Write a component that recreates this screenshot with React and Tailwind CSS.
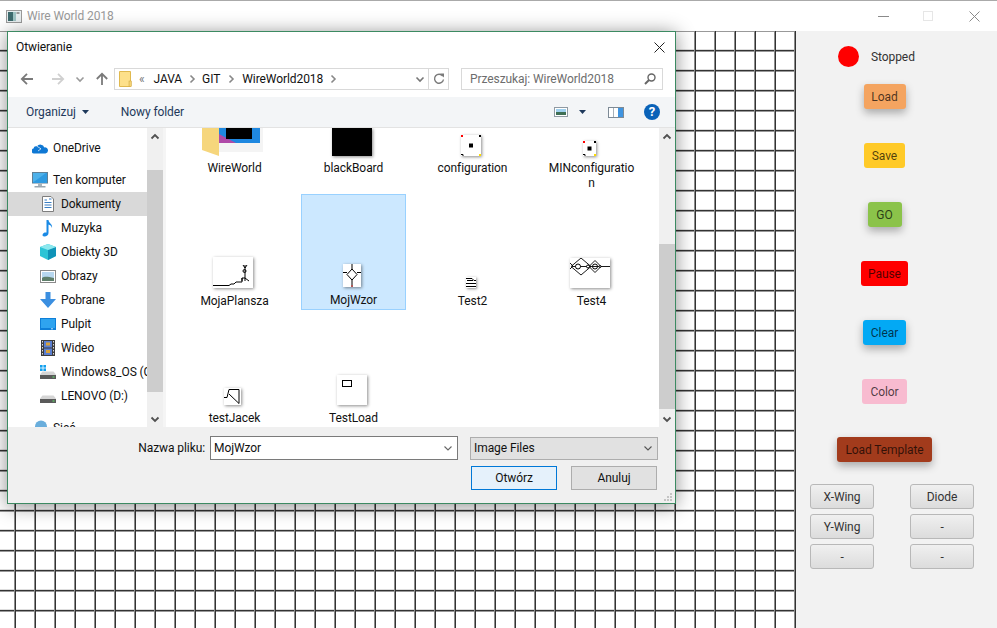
import React from "react";

const Chevron = ({ dir = "down", className = "", color = "#6b6b6b", w = 1.6 }) => {
  const d = { down: "M1.5 3.5 5 7l3.5-3.5", up: "M1.5 6.5 5 3l3.5 3.5", right: "M3.5 1.5 7 5 3.5 8.5" }[dir];
  return (
    <svg width="10" height="10" viewBox="0 0 10 10" className={className}>
      <path d={d} fill="none" stroke={color} strokeWidth={w} />
    </svg>
  );
};

const Arrow = ({ color, rot = 0, className = "" }) => (
  <svg width="14" height="14" viewBox="0 0 14 14" className={className} style={{ transform: `rotate(${rot}deg)` }}>
    <path d="M13 7H2M7 1.8 1.8 7 7 12.2" fill="none" stroke={color} strokeWidth="1.8" />
  </svg>
);

const OneDriveIcon = () => (
  <svg width="16" height="16" viewBox="0 0 16 16">
    <path d="M1.800 13.500A2.500 2.500 0 0 1 1.500 8.600 2.800 2.800 0 0 1 5 6.300 4.200 4.200 0 0 1 12.300 7.400 3.100 3.100 0 0 1 16 10.400 3 3 0 0 1 13.500 13.500Z" fill="#0f78d4" />
    <path d="M5 6.300 9 8.800 6 11" fill="none" stroke="#fff" strokeWidth="0.700" />
  </svg>
);
const PcIcon = () => (
  <svg width="16" height="16" viewBox="0 0 16 16">
    <rect x="0.500" y="0.500" width="15" height="10.500" fill="#4db1ea" stroke="#5f7f95" />
    <path d="M1 10.500 14 1h1v10H1Z" fill="#2f9ae0" />
    <rect x="6" y="11.500" width="4" height="2.500" fill="#aab4bb" />
    <rect x="2.500" y="14" width="11" height="1.500" fill="#9aa7b0" />
  </svg>
);
const DocIcon = () => (
  <svg width="16" height="16" viewBox="0 0 16 16">
    <path d="M2.500 0.500H11L13.500 3V15.500H2.500Z" fill="#fff" stroke="#7d7d7d" />
    <path d="M4.500 4H7M4.500 6.500H11.500M4.500 9H11.500M4.500 11.500H11.500M9 3H11.500" stroke="#3b7fc4" strokeWidth="1" />
  </svg>
);
const MusicIcon = () => (
  <svg width="16" height="17" viewBox="0 0 16 17">
    <path d="M6.500 0h2c0 3 4.500 4 3.500 8-.6-2-2-3-3.500-3.400V13c0 2.200-2 3.500-4 3.500S2 15.200 3 13.800c.8-1.200 2.300-1.600 3.500-1.200Z" fill="#1a8ae5" />
  </svg>
);
const CubeIcon = () => (
  <svg width="16" height="16" viewBox="0 0 16 16">
    <path d="M8 0 16 3v9l-8 4-8-4V3Z" fill="#2cc4d6" />
    <path d="M8 6 16 3v9l-8 4Z" fill="#0f93b8" />
    <path d="M8 0 16 3 8 6 0 3Z" fill="#8de8ee" />
  </svg>
);
const PicIcon = () => (
  <svg width="16" height="13" viewBox="0 0 16 13">
    <rect x="0.500" y="0.500" width="15" height="12" fill="#fff" stroke="#8a8a8a" />
    <rect x="2" y="2" width="12" height="9" fill="#b7d7ef" />
    <path d="M2 8c3-2 6-1 12 0v3H2Z" fill="#5f7f6b" />
  </svg>
);
const DownIcon = () => (
  <svg width="16" height="16" viewBox="0 0 16 16">
    <path d="M5.500 0h5v7H16L8 16 0 7h5.500Z" fill="#3b8fe0" />
  </svg>
);
const DesktopIcon = () => (
  <svg width="16" height="12" viewBox="0 0 16 12">
    <rect width="16" height="12" fill="#0e7fd8" />
    <rect x="1" y="1" width="14" height="9" fill="#2fa4ef" />
    <rect x="11" y="10.300" width="2" height="1" fill="#bfe3fa" />
  </svg>
);
const FilmIcon = () => (
  <svg width="14" height="16" viewBox="0 0 14 16">
    <rect width="14" height="16" fill="#3c3c3c" />
    <rect x="3" y="1" width="8" height="6.500" fill="#5b7fd0" />
    <rect x="3" y="8.500" width="8" height="6.500" fill="#5b7fd0" />
    <rect x="5" y="2.500" width="4" height="3" fill="#d8a23a" />
    <rect x="5" y="10" width="4" height="3" fill="#d8a23a" />
    <path d="M1.500 1v14M12.500 1v14" stroke="#ddd" strokeDasharray="1.500 1.500" />
  </svg>
);
const DriveIcon = ({ win }) => (
  <svg width="16" height="14" viewBox="0 0 16 14">
    {win && (
      <g fill="#12a0ee">
        <rect x="0" y="0" width="2.600" height="2.600" />
        <rect x="3.400" y="0" width="2.600" height="2.600" />
        <rect x="0" y="3.400" width="2.600" height="2.600" />
        <rect x="3.400" y="3.400" width="2.600" height="2.600" />
      </g>
    )}
    <path d="M2.500 6.500h11l2.500 3v1H0v-1Z" fill="#d5d5d5" />
    <rect x="0" y="10" width="16" height="4" fill="#5a5a5a" />
    <rect x="12.500" y="11.500" width="2" height="1" fill="#5fe36a" />
  </svg>
);
const GlobeIcon = () => (
  <svg width="16" height="16" viewBox="0 0 16 16">
    <circle cx="9" cy="6.500" r="6" fill="#6aaedc" />
    <path d="M0 13h16v1H0Z" fill="#1c6aa8" />
  </svg>
);

const navTop = "flex items-center h-6 gap-[5px] whitespace-nowrap";
const NavItem = ({ icon, label, selected }) => (
  <div className={`${navTop} pl-8 ${selected ? "bg-[#d9d9d9]" : ""}`}>
    <span className="w-4 h-4 flex items-center justify-center shrink-0">{icon}</span>
    <span>{label}</span>
  </div>
);

const Thumb = ({ w, h, children }) => (
  <div className="bg-white shadow-[1px_1px_3px_rgba(0,0,0,0.45)]" style={{ width: w, height: h }}>
    <svg width={w} height={h} viewBox={`0 0 ${w} ${h}`} className="block">
      {children}
    </svg>
  </div>
);

const FolderThumb = () => (
  <svg width="61" height="28" viewBox="0 0 61 28" className="block">
    <rect x="17" y="0" width="44" height="24" fill="#f4f4f4" />
    <rect x="17" y="0" width="41" height="15" fill="#1f88e0" />
    <path d="M17 6 34 15H17Z" fill="#b04aa8" />
    <rect x="24" y="0" width="26" height="11" fill="#000" />
    <path d="M0 0H17V28L0 22Z" fill="#f6d67c" />
  </svg>
);

const ConfigThumb = ({ w, h, s }) => (
  <Thumb w={w} h={h}>
    <rect x="0" y="0" width={s} height={s} fill="#f00" />
    <rect x={w - s} y="0" width={s} height={s} fill="#000" />
    <path d={`M0 ${h - s + 0.5}H${s}V${h}`} fill="none" stroke="#000" />
    <rect x={w - s} y={h - s} width={s} height={s} fill="#fd0" />
    <rect x={w / 2 - 2} y={h / 2 - 2} width="4" height="4" fill="#000" />
  </Thumb>
);

const FileCell = ({ thumb, label, selected, pb = "pb-[1px]", gap = "mt-[6px]" }) => (
  <div
    className={`flex flex-col items-center justify-end ${pb} min-w-0 ${
      selected ? "bg-[#cce8ff] border border-[#99d1ff]" : ""
    }`}
  >
    <div className="mr-1">{thumb}</div>
    <div className={`${gap} w-[90px] text-center leading-[15px] break-all`}>{label}</div>
  </div>
);

const SideBtn = ({ label, bg, shadow, w, top }) => (
  <button
    className={`h-[25px] rounded-[3px] text-[12px] text-black/70 ${bg} ${shadow ? "shadow-[0_4px_8px_rgba(0,0,0,0.3)]" : ""} ${w} ${top}`}
  >
    {label}
  </button>
);

const GrayBtn = ({ label }) => (
  <button className="h-[25px] rounded-[3px] border border-[#b8b8b8] bg-[linear-gradient(#f0f0f0,#dcdcdc)] text-[12px] text-[#333]">
    {label}
  </button>
);

export default function App() {
  return (
    <div className="w-[997px] h-[628px] flex flex-col overflow-hidden bg-white text-[12px] tracking-[-0.08px] text-[#111] font-['Roboto','Liberation_Sans',sans-serif]">
      {/* main window title bar */}
      <div className="h-[31px] shrink-0 flex items-center bg-white border-t border-[#aaaaaa] pl-[6px]">
        <svg width="16" height="13" viewBox="0 0 16 13">
          <rect x="0.500" y="0.500" width="15" height="12" fill="#e8eef0" stroke="#9a9a9a" />
          <rect x="2" y="2" width="5" height="9" fill="#3d6b6e" />
          <rect x="7" y="2" width="3" height="9" fill="#9fc4c4" />
          <rect x="10.500" y="2" width="3" height="2" fill="#9a9a9a" />
        </svg>
        <span className="ml-[5px] text-[#9a9a9a]">Wire World 2018</span>
        <div className="ml-auto flex items-center">
          <div className="w-[11px] h-px bg-[#8a8a8a] mr-[34px]" />
          <div className="w-[10px] h-[10px] border border-[#e6e6e6] mr-[36px]" />
          <svg width="11" height="11" viewBox="0 0 11 11" className="mr-[17px]">
            <path d="M0.500 0.500l10 10M10.500 0.500l-10 10" stroke="#8a8a8a" />
          </svg>
        </div>
      </div>

      <div className="flex-1 flex min-h-0">
        {/* canvas */}
        <div className="relative w-[796px] shrink-0 bg-white bg-[linear-gradient(to_right,transparent_14px,#8c8c8c_14px,#8c8c8c_15px,#333333_15px,#333333_16px,transparent_16px),linear-gradient(to_bottom,#999999_1px,transparent_1px,transparent_18px,#dddddd_18px,#dddddd_19px,#333333_19px)] bg-[size:20px_20px]">
          {/* dialog */}
          <div className="absolute left-[7px] top-0 w-[669px] h-[473px] flex flex-col border border-[#3c8a62] bg-white shadow-[0_2px_18px_rgba(0,0,0,0.45)]">
            <div className="h-[28px] shrink-0 flex items-center justify-between pl-2 pr-[10px] pt-[2px]">
              <span>Otwieranie</span>
              <svg width="11" height="11" viewBox="0 0 11 11">
                <path d="M0.500 0.500l10 10M10.500 0.500l-10 10" stroke="#222" />
              </svg>
            </div>

            {/* nav row */}
            <div className="h-[37px] shrink-0 flex items-center">
              <Arrow color="#7a7a7a" className="ml-3" />
              <Arrow color="#d0d0d0" rot={180} className="ml-[17px]" />
              <Chevron className="ml-[10px]" color="#9a9a9a" />
              <Arrow color="#7a7a7a" rot={90} className="ml-[10px]" />
              <div className="ml-[5px] w-[335px] h-[22px] border border-[#d9d9d9] flex items-center pl-1">
                <svg width="13" height="16" viewBox="0 0 13 16" className="shrink-0">
                  <path d="M0.500 0.500H11.500V15.500H0.500Z" fill="#fde08a" stroke="#e0b94f" />
                  <rect x="10" y="10" width="2.500" height="5.500" fill="#f5d272" stroke="#c9a23f" strokeWidth="0.500" />
                </svg>
                <span className="ml-[7px] text-[#777]">«</span>
                <span className="ml-[9px]">JAVA</span>
                <Chevron dir="right" className="mx-[5px]" color="#888" />
                <span>GIT</span>
                <Chevron dir="right" className="mx-[6px]" color="#888" />
                <span>WireWorld2018</span>
                <Chevron dir="right" className="mx-[5px]" color="#888" />
                <Chevron className="ml-auto mr-[3px]" color="#777" />
                <div className="h-full border-l border-[#d9d9d9] w-[20px] flex items-center justify-center">
                  <svg width="12" height="12" viewBox="0 0 12 12">
                    <path d="M9.800 3.200A4.500 4.500 0 1 0 10.500 6.500" fill="none" stroke="#7a7a7a" strokeWidth="1.400" />
                    <path d="M7 0.500h4v4Z" fill="#7a7a7a" />
                  </svg>
                </div>
              </div>
              <div className="ml-3 w-[202px] h-[22px] border border-[#d9d9d9] flex items-center pl-2 pr-[6px] text-[#6d6d6d]">
                <span>Przeszukaj: WireWorld2018</span>
                <svg width="12" height="12" viewBox="0 0 12 12" className="ml-auto">
                  <circle cx="7.500" cy="4.500" r="3.500" fill="none" stroke="#666" strokeWidth="1.400" />
                  <path d="M5 7 1 11" stroke="#666" strokeWidth="2" />
                </svg>
              </div>
            </div>

            {/* toolbar */}
            <div className="h-[31px] shrink-0 flex items-center bg-[#f3f5f7] border-b border-[#e3e3e3] text-[#1e395b] pl-[18px]">
              <span>Organizuj</span>
              <svg width="7" height="4" viewBox="0 0 7 4" className="ml-[6px]">
                <path d="M0 0h7L3.500 4Z" fill="#1e395b" />
              </svg>
              <span className="ml-[32px]">Nowy folder</span>
              <svg width="14" height="10" viewBox="0 0 14 10" className="ml-auto">
                <rect x="0.500" y="0.500" width="13" height="9" fill="#fff" stroke="#8f9aa3" />
                <rect x="2" y="2" width="10" height="3" fill="#9fd0ee" />
                <rect x="2" y="5" width="10" height="3" fill="#3f6f55" />
              </svg>
              <svg width="7" height="4" viewBox="0 0 7 4" className="ml-[11px]">
                <path d="M0 0h7L3.500 4Z" fill="#1e395b" />
              </svg>
              <svg width="16" height="11" viewBox="0 0 16 11" className="ml-[22px]">
                <rect x="0.500" y="0.500" width="15" height="10" fill="#fff" stroke="#7d8a96" />
                <rect x="10" y="1" width="5" height="9" fill="#3f94e0" />
                <rect x="5" y="1" width="1" height="9" fill="#a8b2ba" />
              </svg>
              <div className="ml-5 mr-[15px] w-4 h-4 rounded-full bg-[#0a62b8] text-white font-bold text-[13px] leading-4 text-center">?</div>
            </div>

            {/* main */}
            <div className="h-[299px] shrink-0 flex">
              <div className="w-[139px] overflow-hidden pt-2 shrink-0">
                <div className={`${navTop} pl-6`}>
                  <span className="w-4 h-4 flex items-center shrink-0"><OneDriveIcon /></span>
                  <span>OneDrive</span>
                </div>
                <div className={`${navTop} pl-6 mt-2`}>
                  <span className="w-4 h-4 flex items-center shrink-0"><PcIcon /></span>
                  <span>Ten komputer</span>
                </div>
                <NavItem icon={<DocIcon />} label="Dokumenty" selected />
                <NavItem icon={<MusicIcon />} label="Muzyka" />
                <NavItem icon={<CubeIcon />} label="Obiekty 3D" />
                <NavItem icon={<PicIcon />} label="Obrazy" />
                <NavItem icon={<DownIcon />} label="Pobrane" />
                <NavItem icon={<DesktopIcon />} label="Pulpit" />
                <NavItem icon={<FilmIcon />} label="Wideo" />
                <NavItem icon={<DriveIcon win />} label="Windows8_OS (C:)" />
                <NavItem icon={<DriveIcon />} label="LENOVO (D:)" />
                <div className={`${navTop} pl-6 mt-2`}>
                  <span className="w-4 h-4 flex items-center shrink-0"><GlobeIcon /></span>
                  <span>Sieć</span>
                </div>
              </div>
              {/* left scrollbar */}
              <div className="w-4 shrink-0 bg-[#f0f0f0] flex flex-col items-center">
                <Chevron dir="up" className="mt-1" color="#505050" w={1.8} />
                <div className="w-full h-[222px] mt-[28px] bg-[#cdcdcd]" />
                <Chevron className="mt-[22px]" color="#505050" w={1.8} />
              </div>
              <div className="w-[3px] shrink-0 bg-[#f5f5f5]" />

              {/* files */}
              <div className="w-[493px] shrink-0 overflow-hidden pl-4 grid grid-cols-[105px_105px_105px_105px] gap-x-[14px] grid-rows-[66px_116px_117px]">
                <FileCell pb="pb-[18px]" gap="mt-[5px]" thumb={<FolderThumb />} label="WireWorld" />
                <FileCell pb="pb-[18px]" gap="mt-[5px]" thumb={<div className="w-10 h-7 bg-black shadow-[1px_1px_3px_rgba(0,0,0,0.45)]" />} label="blackBoard" />
                <FileCell pb="pb-[18px]" gap="mt-[5px]" thumb={<ConfigThumb w={20} h={21} s={2} />} label="configuration" />
                <FileCell pb="pb-[3px]" gap="mt-[5px]" thumb={<ConfigThumb w={13} h={15} s={2} />} label="MINconfiguration" />

                <FileCell
                  label="MojaPlansza"
                  thumb={
                    <Thumb w={40} h={31}>
                      <path d="M0 28.500H16L18 27H21L23 25H29V21M32 24V19M29 24V21H32L36 24M32 8v11M30 8l2 3 2-3" fill="none" stroke="#000" />
                      <circle cx="31.500" cy="14" r="1.500" fill="none" stroke="#000" />
                    </Thumb>
                  }
                />
                <FileCell
                  selected
                  label="MojWzor"
                  thumb={
                    <Thumb w={18} h={23}>
                      <path d="M9 0V5M9 5l5 5.500-5 5.500-5-5.500ZM0 8.500H4M14 8.500H18M9 16V23" fill="none" stroke="#000" />
                      <rect x="8.500" y="21" width="1" height="2" fill="#d33" />
                    </Thumb>
                  }
                />
                <FileCell
                  label="Test2"
                  thumb={
                    <Thumb w={10} h={11}>
                      <path d="M0 1.500H6M0 6.500H10M0 9.500H10M6 1.500 8 3.500H10M1 3.500H7" fill="none" stroke="#000" />
                    </Thumb>
                  }
                />
                <FileCell
                  label="Test4"
                  thumb={
                    <Thumb w={40} h={30}>
                      <path d="M0 5l3 3-3 3M3 8.500H40M11 0l10 8.500-10 8.500L1 8.500ZM19 8.500l6-6 6 6-6 6Z" fill="none" stroke="#000" strokeWidth="0.900" />
                      <circle cx="8" cy="8.500" r="2.500" fill="#fff" stroke="#000" />
                      <circle cx="18" cy="8.500" r="1.500" fill="#fff" stroke="#000" />
                      <circle cx="25" cy="8.500" r="2.500" fill="none" stroke="#000" />
                      <circle cx="30" cy="8.500" r="1" fill="#fff" stroke="#000" />
                    </Thumb>
                  }
                />

                <FileCell
                  label="testJacek"
                  thumb={
                    <Thumb w={17} h={17}>
                      <path d="M0 9.500H3L5 1.500H15V15.500L5 6" fill="none" stroke="#000" />
                    </Thumb>
                  }
                />
                <FileCell
                  label="TestLoad"
                  thumb={
                    <Thumb w={30} h={30}>
                      <rect x="5.500" y="5.500" width="9" height="6" fill="none" stroke="#000" />
                    </Thumb>
                  }
                />
              </div>

              {/* right scrollbar */}
              <div className="w-4 shrink-0 bg-[#f0f0f0] flex flex-col items-center">
                <Chevron dir="up" className="mt-[4px]" color="#505050" w={1.8} />
                <div className="w-full h-[165px] mt-[102px] bg-[#cdcdcd]" />
                <Chevron className="mt-[5px]" color="#505050" w={1.8} />
              </div>
            </div>

            {/* footer */}
            <div className="relative flex-1 bg-[#f0f0f0] pt-[9px] pr-[17px]">
              <div className="flex justify-end items-center h-6">
                <span>Nazwa pliku:</span>
                <div className="ml-[5px] w-[248px] h-6 bg-white border border-[#7a7a7a] flex items-center pl-[3px] pr-1">
                  <span>MojWzor</span>
                  <Chevron className="ml-auto" color="#666" w={1.1} />
                </div>
                <div className="ml-3 w-[188px] h-[23px] bg-[#e1e1e1] border border-[#adadad] flex items-center pl-[3px] pr-1">
                  <span>Image Files</span>
                  <Chevron className="ml-auto" color="#555" w={1.1} />
                </div>
              </div>
              <div className="flex justify-end gap-[14px] mt-[6px] pr-px">
                <button className="w-[86px] h-6 bg-[#e5f1fb] border border-[#0078d7] text-[12px]">Otwórz</button>
                <button className="w-[86px] h-6 bg-[#e1e1e1] border border-[#adadad] text-[12px]">Anuluj</button>
              </div>
              <svg width="9" height="9" viewBox="0 0 9 9" className="absolute right-[2px] bottom-[1px]">
                <path d="M6 0h2v2H6ZM3 3h2v2H3ZM6 3h2v2H6ZM0 6h2v2H0ZM3 6h2v2H3ZM6 6h2v2H6Z" fill="#c4c4c4" />
              </svg>
            </div>
          </div>
        </div>

        {/* right sidebar */}
        <div className="flex-1 bg-[#f2f2f2] min-w-0">
          <div className="w-[177px] flex flex-col items-center">
            <div className="self-start ml-[42px] mt-[15px] h-[21px] flex items-center">
              <div className="w-[21px] h-[21px] rounded-full bg-[#ff0000]" />
              <span className="ml-3 text-[#333]">Stopped</span>
            </div>
            <SideBtn label="Load" bg="bg-[#f4a460]" shadow w="w-[42px]" top="mt-[17px]" />
            <SideBtn label="Save" bg="bg-[#ffca28]" w="w-[41px]" top="mt-[34px]" />
            <SideBtn label="GO" bg="bg-[#8bc34a]" shadow w="w-[34px]" top="mt-[34px]" />
            <SideBtn label="Pause" bg="bg-[#ff0000]" w="w-[47px]" top="mt-[34px]" />
            <SideBtn label="Clear" bg="bg-[#03a9f4]" shadow w="w-[43px]" top="mt-[34px]" />
            <SideBtn label="Color" bg="bg-[#f8bbd0]" w="w-[45px]" top="mt-[34px]" />
            <SideBtn label="Load Template" bg="bg-[#a23b1c]" shadow w="w-[95px]" top="mt-[33px]" />
            <div className="self-start ml-[14px] mt-[22px] grid grid-cols-[64px_64px] gap-x-9 gap-y-[5px]">
              <GrayBtn label="X-Wing" />
              <GrayBtn label="Diode" />
              <GrayBtn label="Y-Wing" />
              <GrayBtn label="-" />
              <GrayBtn label="-" />
              <GrayBtn label="-" />
            </div>
          </div>
        </div>
      </div>
    </div>
  );
}
